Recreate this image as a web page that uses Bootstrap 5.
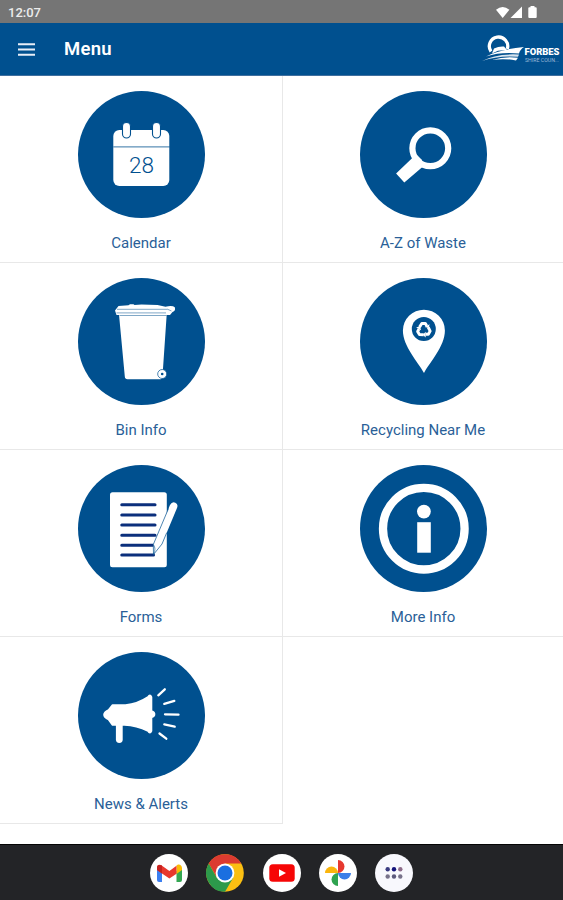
<!DOCTYPE html>
<html lang="en">
<head>
<meta charset="utf-8">
<meta name="viewport" content="width=device-width, initial-scale=1">
<title>Menu</title>
<link href="https://cdn.jsdelivr.net/npm/bootstrap@5.3.0/dist/css/bootstrap.min.css" rel="stylesheet">
<style>
  :root { --brand: #00508f; }
  body { font-family: Roboto, "Liberation Sans", sans-serif; height: 900px; overflow: hidden; }
  svg { display: block; flex: none; }
  .status-bar { height: 23px; background: #757575; color: #ececec; font-size: 13px; font-weight: 500; padding: 2px 24px 0 8px; line-height: 21px; }
  .app-bar { height: 53px; background: var(--brand); border-bottom: 1px solid #3f6f9f; padding: 0 1px 0 18px; }
  .app-title { font-size: 18.5px; font-weight: 600; letter-spacing: .25px; line-height: 24px; margin-left: 29px; }
  .tile { height: 187px; padding-top: 15px; border-bottom: 1px solid #e8e8e8; color: #2a5f98; text-decoration: none; }
  .tile-start { border-right: 1px solid #e8e8e8; width: 283px; }
  .tile-end { width: 280px; }
  .tile-label { font-size: 15px; line-height: 20px; margin-top: 15px; letter-spacing: 0; }
  .dock { height: 56px; background: #232427; border-top: 1px solid #050505; gap: 18.4px; }
  .disc { fill: var(--brand); }
  .ink { stroke: var(--brand); fill: none; }
</style>
</head>
<body class="d-flex flex-column bg-white">
<header>
  <div class="status-bar d-flex justify-content-between align-items-center">
    <span>12:07</span>
    <svg width="44" height="14" viewBox="0 0 44 14" fill="#fff">
      <path d="M1 3.700Q7.700-1.700 14.400 3.700L7.700 12Z"/>
      <path d="M27 .5V12H15.500Z"/>
      <path d="M35.500 0h4v1.300h1.200q1 0 1 1v8.700q0 1-1 1h-6.400q-1 0-1-1V2.300q0-1 1-1h1.200z"/>
    </svg>
  </div>
  <nav class="app-bar d-flex align-items-center text-white">
    <svg width="17" height="13" viewBox="0 0 17 13" stroke="#e8eef8" stroke-width="2.100"><path d="M0 1.200h17M0 6.500h17M0 11.800h17"/></svg>
    <span class="app-title">Menu</span>
    <svg class="ms-auto" width="80" height="32" viewBox="0 0 80 32">
      <path d="M9 18.500A9.200 9.200 0 1 1 25.300 16" fill="none" stroke="#fff" stroke-width="3.300"/>
      <path d="M12 15.500l-2 5 6-2.800 9-.8-3-3.400q-5-.5-10 2z" fill="#fff"/>
      <path d="M4 23.400Q17 16.500 42 14Q38 16.500 37 20.500Q19 18.600 4 23.400Z" fill="#fff"/>
      <path d="M0 28Q14 20.300 37 21.500L36 23.800Q17 22 0 28Z" fill="#fff" opacity=".85"/>
      <path d="M10 27Q23 23 36 24.800L34 27.600Q23 25 10 27Z" fill="#fff"/>
      <text x="42.500" y="21.800" font-size="9" font-weight="900" textLength="35" lengthAdjust="spacingAndGlyphs" fill="#fff">FORBES</text>
      <text x="43" y="28.800" font-size="6" textLength="34" lengthAdjust="spacingAndGlyphs" fill="#9bb9d8">SHIRE COUN...</text>
    </svg>
  </nav>
</header>

<main class="flex-grow-1">
  <div class="row g-0">
    <a class="col-auto tile tile-start d-flex flex-column align-items-center">
      <svg width="127" height="127" viewBox="-63.5 -63.5 127 127">
        <circle class="disc" r="63.5"/>
        <rect x="-28.200" y="-24.500" width="56" height="56" rx="6" fill="#fff"/>
        <path class="ink" d="M-28.200-7.600h56.500" stroke-width=".8"/>
        <g fill="#fff" stroke="#00508f" stroke-width="1.100"><rect x="-19" y="-32" width="8" height="15.500" rx="4"/><rect x="11" y="-32" width="8" height="15.500" rx="4"/></g>
        <text x="0" y="18.200" text-anchor="middle" font-size="22.500" font-weight="300" class="disc">28</text>
      </svg>
      <span class="tile-label">Calendar</span>
    </a>
    <a class="col-auto tile tile-end d-flex flex-column align-items-center">
      <svg width="127" height="127" viewBox="-63.5 -63.5 127 127">
        <circle class="disc" r="63.5"/>
        <circle cx="6.800" cy="-6.200" r="17.900" fill="none" stroke="#fff" stroke-width="6.200"/>
        <path d="M-9 6L-4.500 10.500L-.5 12L-19.200 28L-27.400 19L-12 4.300L-9.500 1.500L-8.500 4.500L-2.500 10.500Z" fill="#fff"/>
        <path d="M-9 8L-4 3" stroke="#fff" stroke-width="8"/>
      </svg>
      <span class="tile-label">A-Z of Waste</span>
    </a>
    <a class="col-auto tile tile-start d-flex flex-column align-items-center">
      <svg width="127" height="127" viewBox="-63.5 -63.5 127 127">
        <circle class="disc" r="63.5"/>
        <path d="M-22.500-27H25.200L20.900 36Q20.800 37.700 19 37.700H-14Q-16.500 37.700-16.700 35Z" fill="#fff"/>
        <path d="M-26.500-31L-23-35.500L-13-36.200L-11.500-37.300H-8L-7-36.500L0-36.900L16-36.500L24-34.800Q31-36.200 33.300-34.200Q34.500-30.500 31-29.500L28.500-26.500H-25Z" fill="#fff"/>
        <path class="ink" d="M-24.500-32.200H25.500M-25-28.600H24.500M25.500-32.500L30-30.500M-22-26H25" stroke-width=".5"/>
        <circle cx="20.700" cy="32.500" r="4.500" fill="#fff" stroke="#00508f" stroke-width=".7"/>
        <circle cx="20.700" cy="32.500" r="1.300" class="disc"/>
      </svg>
      <span class="tile-label">Bin Info</span>
    </a>
    <a class="col-auto tile tile-end d-flex flex-column align-items-center">
      <svg width="127" height="127" viewBox="-63.5 -63.5 127 127">
        <circle class="disc" r="63.5"/>
        <path d="M.5 31.500C-5 21-20.600 5-20.600-11A21 20.800 0 0 1 21.400-11C21.400 5 6 21 .5 31.500Z" fill="#fff"/>
        <circle class="disc" cx=".3" cy="-12.500" r="12"/>
        <g transform="translate(.3 -11.800)" fill="none" stroke="#fff" stroke-width="2.900" stroke-linejoin="round">
          <g><path d="M-4.300-2.600L-2-6.200H1.600L3-3.800"/><path d="M5.800-5.500L4.800-1.600L.8-2.700Z" fill="#fff" stroke="none"/></g>
          <g transform="rotate(120)"><path d="M-4.300-2.600L-2-6.200H1.600L3-3.800"/><path d="M5.800-5.500L4.800-1.600L.8-2.700Z" fill="#fff" stroke="none"/></g>
          <g transform="rotate(240)"><path d="M-4.300-2.600L-2-6.200H1.600L3-3.800"/><path d="M5.800-5.500L4.800-1.600L.8-2.700Z" fill="#fff" stroke="none"/></g>
        </g>
      </svg>
      <span class="tile-label">Recycling Near Me</span>
    </a>
    <a class="col-auto tile tile-start d-flex flex-column align-items-center">
      <svg width="127" height="127" viewBox="-63.5 -63.5 127 127">
        <circle class="disc" r="63.5"/>
        <rect x="-31.500" y="-36.300" width="56.800" height="75" rx="2.500" fill="#fff"/>
        <path d="M-19.700-23.800H13.500M-19.700-13.500H13.500M-19.700-3.500H13.500M-19.700 6.800H13.500M-19.700 16.700H12M-19.700 26.500H12" stroke="#0b2f7c" stroke-width="3.100" stroke-linecap="round"/>
        <path d="M28.500-23.500Q30.500-27.300 33.800-25.800Q37-24.200 35.500-20.500L20.500 15.500L12 26L11.800 16Z" fill="#fff"/>
        <path class="ink" d="M27-20L11.800 16L12 26L20.500 15.500L25.300 4" stroke-width=".7"/>
        <path class="ink" d="M11.800 16Q15 20 12 26" stroke-width=".6"/>
      </svg>
      <span class="tile-label">Forms</span>
    </a>
    <a class="col-auto tile tile-end d-flex flex-column align-items-center">
      <svg width="127" height="127" viewBox="-63.5 -63.5 127 127">
        <circle class="disc" r="63.5"/>
        <circle cx=".3" cy=".2" r="40.800" fill="none" stroke="#fff" stroke-width="8.300"/>
        <circle cx=".4" cy="-16.900" r="6.900" fill="#fff"/>
        <rect x="-6.300" y="-6.300" width="13.600" height="30.500" fill="#fff"/>
      </svg>
      <span class="tile-label">More Info</span>
    </a>
    <a class="col-auto tile tile-start d-flex flex-column align-items-center">
      <svg width="127" height="127" viewBox="-63.5 -63.5 127 127">
        <circle class="disc" r="63.5"/>
        <g fill="#fff" stroke="#fff" stroke-linecap="round" stroke-linejoin="round">
          <path d="M-29-10.500H-16Q-4-11.500 6.500-18.500Q8.500-22 10-18.500V-4.500Q13.500-3.500 13-.5Q12.500 1.500 10 2V15.500Q8.500 19 6.500 15.500Q-5 10-17 9.500L-29 9.500L-33 4Q-37.500 2-37.500-.8Q-37.500-3.500-33-5.500Z" stroke-width="1.600"/>
          <path d="M-22.200 10V24" stroke-width="6.800"/>
          <path d="M16.800-20.200L23.300-26.200M22.800-11.600L32.800-14.600M23.500-1.200L37-.9M22.800 8.800L33.200 11.200M18 18L24.800 23.200" fill="none" stroke-width="2.300"/>
        </g>
      </svg>
      <span class="tile-label">News &amp; Alerts</span>
    </a>
  </div>
</main>

<footer class="dock d-flex justify-content-center align-items-center">
  <svg width="38" height="38" viewBox="-19 -19 38 38">
    <circle r="19" fill="#fff"/>
    <path d="M-12-5L-7-2V9H-10Q-12 9-12 7Z" fill="#3b7ff0"/>
    <path d="M13-5L7.500-2V9H11Q13 9 13 7Z" fill="#34a853"/>
    <path d="M13-5Q12.500-9 9-8.500L7.500-7.500V1L13-3Z" fill="#fbbc04"/>
    <path d="M-12-5Q-12-9.500-8-8L.4-2L7.500-7.300V.7L.4 5.500L-7 .5L-12-3Z" fill="#e8382e"/>
    <path d="M-12-5Q-12-9.500-7-7.400V.6L-12-3Z" fill="#c5221f"/>
  </svg>
  <svg width="38" height="38" viewBox="-19 -19 38 38">
    <circle r="18.800" fill="#fbbf12"/>
    <path d="M-16.300-9.400A18.800 18.800 0 0 1 16.300-9.400H0L-8 4.700Z" fill="#dc3b30"/>
    <path d="M-16.300-9.400A18.800 18.800 0 0 0 0 18.800L8.200 4.700L-8.200 4.700Z" fill="#2c9a4b"/>
    <circle r="9.400" fill="#fff"/><circle r="7.500" fill="#1a6fe0"/>
  </svg>
  <svg width="38" height="38" viewBox="-19 -19 38 38">
    <circle r="19" fill="#fff"/><rect x="-12.700" y="-8.800" width="25.400" height="17.600" rx="3.500" fill="#f60606"/><path d="M-3-3.800L4 0L-3 3.800Z" fill="#fff"/>
  </svg>
  <svg width="38" height="38" viewBox="-19 -19 38 38">
    <circle r="19" fill="#fff"/>
    <path d="M0 0V-13A6.500 6.500 0 0 1 0 0Z" fill="#e6392f"/>
    <path d="M0 0H13A6.500 6.500 0 0 1 0 0Z" fill="#3c7fe8"/>
    <path d="M0 0V13A6.500 6.500 0 0 1 0 0Z" fill="#2fa350"/>
    <path d="M0 0H-13A6.500 6.500 0 0 1 0 0Z" fill="#fbb50c"/>
  </svg>
  <svg width="38" height="38" viewBox="-19 -19 38 38">
    <circle r="19" fill="#f8f8fd"/>
    <g fill="#77728a"><circle cx="-6.300" cy="-3.800" r="2.200" fill="#393b80"/><circle cy="-3.800" r="2.200" fill="#14147a"/><circle cx="6.300" cy="-3.800" r="2.200" fill="#8d6c8a"/><circle cx="-6.300" cy="3.500" r="2.200"/><circle cy="3.500" r="2.200" fill="#5c5a7c"/><circle cx="6.300" cy="3.500" r="2.200"/></g>
  </svg>
</footer>
<script src="https://cdn.jsdelivr.net/npm/bootstrap@5.3.0/dist/js/bootstrap.bundle.min.js"></script>
</body>
</html>
